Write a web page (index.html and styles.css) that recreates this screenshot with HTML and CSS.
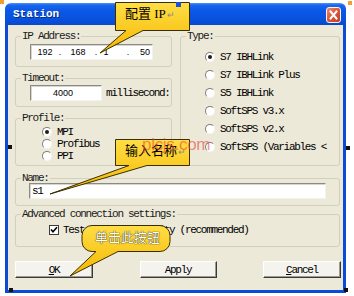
FILE: index.html
```html
<!DOCTYPE html>
<html>
<head>
<meta charset="utf-8">
<link rel="stylesheet" href="styles.css">
</head>
<body>
<div class="page">
  <div class="window">
    <div class="titlebar">
      <span class="title">Station</span>
      <span class="close"><svg width="13" height="14" viewBox="0 0 13 14"><path d="M3.5 3.5 L9.5 10.5 M9.5 3.5 L3.5 10.5" stroke="#fff" stroke-width="2" stroke-linecap="square"/></svg></span>
    </div>
    <div class="client">
      <div class="top">
        <div class="leftcol">
          <div class="grp grp-ip">
            <div class="glabel">IP Address:</div>
            <div class="field ipfield"><span>192</span><span>.</span><span>168</span><span>.</span><span>1</span><span>.</span><span>50</span></div>
          </div>
          <div class="grp grp-timeout">
            <div class="glabel">Timeout:</div>
            <div class="trow"><div class="field tfield">4000</div><span class="unit">millisecond:</span></div>
          </div>
          <div class="grp grp-profile">
            <div class="glabel">Profile:</div>
            <div class="popts">
              <div class="opt"><span class="rb on"></span><span>MPI</span></div>
              <div class="opt"><span class="rb"></span><span>Profibus</span></div>
              <div class="opt"><span class="rb"></span><span>PPI</span></div>
            </div>
          </div>
        </div>
        <div class="grp grp-type">
          <div class="glabel">Type:</div>
          <div class="topts">
            <div class="opt"><span class="rb on"></span><span>S7 IBHLink</span></div>
            <div class="opt"><span class="rb"></span><span>S7 IBHLink Plus</span></div>
            <div class="opt"><span class="rb"></span><span>S5 IBHLink</span></div>
            <div class="opt"><span class="rb"></span><span>SoftSPS v3.x</span></div>
            <div class="opt"><span class="rb"></span><span>SoftSPS v2.x</span></div>
            <div class="opt"><span class="rb"></span><span>SoftSPS (Variables &lt;</span></div>
          </div>
        </div>
      </div>
      <div class="grp grp-name">
        <div class="glabel">Name:</div>
        <div class="field nfield">s1</div>
      </div>
      <div class="grp grp-adv">
        <div class="glabel">Advanced connection settings:</div>
        <div class="crow"><span class="cb"><svg width="8" height="8" viewBox="0 0 8 8"><path d="M1 3.5 L3 5.8 L7 1.2" stroke="#000" stroke-width="1.6" fill="none"/></svg></span><span>Test the connectivity (recommended)</span></div>
      </div>
      <div class="buttons">
        <div class="btn b-ok"><span><u>O</u>K</span></div>
        <div class="btn b-apply"><span>Apply</span></div>
        <div class="btn b-cancel"><span><u>C</u>ancel</span></div>
      </div>
    </div>
  </div>

  <div class="overlay">
    <svg class="callouts" width="354" height="296" viewBox="0 0 354 296">
      <defs>
        <linearGradient id="gy" x1="0" y1="0" x2="0" y2="1">
          <stop offset="0" stop-color="#FFDE45"/>
          <stop offset="1" stop-color="#F4B700"/>
        </linearGradient>
      </defs>
      <path d="M115.5 2.5 H189.5 V30.5 H143 L100 53 L126 30.5 H115.5 Z" fill="url(#gy)" stroke="#3a2e00" stroke-width="1"/>
      <path d="M115.5 139.5 H189.5 V165.5 H147 L50 194 L129 165.5 H115.5 Z" fill="url(#gy)" stroke="#3a2e00" stroke-width="1"/>
      <path d="M92 225.5 H160 A10 10 0 0 1 170 235.5 V241.5 A10 10 0 0 1 160 251.5 H118 L70 276 L96 251.5 H92 A10 10 0 0 1 82 241.5 V235.5 A10 10 0 0 1 92 225.5 Z" fill="url(#gy)" stroke="#3a2e00" stroke-width="1"/>
    </svg>
    <span class="ctext c1">配置 IP<span class="pmark">↵</span></span>
    <span class="ctext c2">输入名称<span class="pmark">↵</span></span>
    <span class="ctext c3">单击此按钮</span>
    <span class="wm">plcjs.com</span>
    <span class="h h-tl"></span>
    <span class="h h-tr"></span>
    <span class="h h-cb"></span>
    <span class="h h-lm"></span>
    <span class="h h-rm"></span>
    <span class="h h-bl"></span>
    <span class="h h-br"></span>
  </div>
</div>
</body>
</html>
```

FILE: styles.css
```css
html, body {
  margin: 0;
  padding: 0;
  background: #fff;
}
body {
  width: 354px;
  height: 296px;
  overflow: hidden;
}
.page {
  position: relative;
  width: 354px;
  height: 296px;
  box-sizing: border-box;
  padding: 3px 8px 0 5px;
}
.window {
  width: 341px;
  height: 290px;
  display: flex;
  flex-direction: column;
}
.titlebar {
  height: 22px;
  flex: none;
  border-radius: 6px 6px 0 0;
  background: linear-gradient(#4C94F6 0%, #1A66EE 10%, #0A58E6 35%, #0853DE 70%, #0848CF 100%);
  display: flex;
  align-items: center;
  justify-content: space-between;
  padding: 0 5px 0 8px;
}
.title {
  font: bold 11px/12px "Liberation Mono", monospace;
  color: #fff;
  text-shadow: 1px 1px 0 #0b2a80;
}
.close {
  width: 15px;
  height: 16px;
  box-sizing: border-box;
  border: 1px solid #f4f4f4;
  border-radius: 3px;
  background: linear-gradient(135deg, #F08A6C 0%, #E0583A 45%, #C63A1E 100%);
  display: flex;
  align-items: center;
  justify-content: center;
  margin-top: 2px;
}
.close svg { display: block; }
.client {
  flex: 1;
  background: #ECE9D8;
  border: 3px solid #0A4AD6;
  border-top: 0;
  padding: 0 3px 12px 7px;
  font: 11px/12px "Liberation Mono", monospace;
  letter-spacing: -1.3px;
  color: #000;
}
.top {
  display: flex;
  gap: 8px;
}
.leftcol {
  width: 157px;
  flex: none;
}
.grp {
  border: 1px solid #D0D0BF;
  border-radius: 3px;
}
.glabel {
  margin: -7px 0 0 5px;
  padding: 0 1px;
  width: max-content;
  height: 12px;
  line-height: 12px;
  background: #ECE9D8;
  color: #1b1b1b;
  white-space: nowrap;
}
.field {
  box-sizing: border-box;
  height: 16px;
  background: #fff;
  border: 1px solid;
  border-color: #8a8a86 #f2f2ee #f2f2ee #8a8a86;
  box-shadow: inset 1px 1px 0 #d8d6cc;
}
.grp-ip {
  margin-top: 11px;
  padding-bottom: 6px;
}
.ipfield {
  margin: 2px 0 0 14px;
  width: 123px;
  display: grid;
  grid-template-columns: 28px 2px 34px 2px 18px 26px 8px;
  justify-items: center;
  align-items: center;
  font: 9px/14px "Liberation Sans", sans-serif;
  letter-spacing: 0;
}
.grp-timeout {
  margin-top: 11px;
  padding-bottom: 5px;
}
.trow {
  display: flex;
  align-items: center;
  margin-top: 1px;
  white-space: nowrap;
}
.tfield {
  margin-left: 14px;
  width: 72px;
  font: 9px/14px "Liberation Sans", sans-serif;
  letter-spacing: 0;
  text-align: center;
  padding-right: 6px;
}
.unit {
  margin-left: 4px;
}
.grp-profile {
  margin-top: 11px;
  padding-bottom: 3px;
}
.popts {
  margin-top: 2px;
  padding-left: 26px;
}
.popts .opt { height: 12px; }
.opt {
  display: flex;
  align-items: center;
  white-space: nowrap;
}
.rb {
  width: 10px;
  height: 10px;
  box-sizing: border-box;
  border-radius: 50%;
  border: 1px solid;
  border-color: #7e7e7a #f6f6f2 #f6f6f2 #7e7e7a;
  background: #fff;
  margin-right: 5px;
  flex: none;
  display: flex;
  align-items: center;
  justify-content: center;
}
.rb.on::after {
  content: "";
  width: 4px;
  height: 4px;
  border-radius: 50%;
  background: #1e1e1e;
}
.grp-type {
  flex: 1;
  margin-top: 11px;
}
.topts {
  margin-top: 6px;
  padding-left: 24px;
}
.topts .opt { height: 18px; }
.grp-name {
  margin-top: 12px;
  padding-bottom: 6px;
}
.nfield {
  margin: -1px 13px 0 13px;
  padding-left: 2px;
  line-height: 14px;
}
.grp-adv {
  margin-top: 8px;
  padding-bottom: 8px;
}
.crow {
  margin-top: 2px;
  height: 16px;
  display: flex;
  align-items: center;
  padding-left: 33px;
  white-space: nowrap;
}
.cb {
  width: 10px;
  height: 10px;
  box-sizing: border-box;
  border: 1px solid #3c3c3c;
  background: #fff;
  margin-right: 4px;
  display: flex;
  align-items: center;
  justify-content: center;
  flex: none;
}
.cb svg { display: block; }
.buttons {
  margin-top: 14px;
  display: flex;
  justify-content: space-between;
  margin-right: -1px;
}
.btn {
  height: 17px;
  box-sizing: border-box;
  border: 1px solid;
  border-color: #ffffff #3a3a3a #3a3a3a #ffffff;
  box-shadow: inset -1px -1px 0 #9c9a90;
  background: #F4F3EE;
  display: flex;
  align-items: center;
  justify-content: center;
}
.b-ok { width: 78px; }
.b-apply { width: 77px; }
.b-cancel { width: 78px; }

.overlay {
  position: absolute;
  left: 0;
  top: 0;
  width: 354px;
  height: 296px;
  pointer-events: none;
}
.callouts {
  position: absolute;
  left: 0;
  top: 0;
}
.ctext {
  position: absolute;
  font-family: "Liberation Serif", "Noto Sans CJK SC", serif;
  white-space: nowrap;
  color: #000;
}
.c1 {
  left: 125px;
  top: 6px;
  font-size: 13px;
  line-height: 16px;
}
.c2 {
  left: 125px;
  top: 143px;
  font-size: 13px;
  line-height: 16px;
}
.c3 {
  left: 95px;
  top: 230px;
  font-size: 13px;
  line-height: 16px;
  color: #fff;
  text-shadow: 0 0 1px #2a2200, 0 0 1px #2a2200;
}
.pmark {
  color: #8a8a8a;
  font-size: 9px;
  margin-left: 1px;
}
.wm {
  position: absolute;
  left: 142px;
  top: 135px;
  font: 17px/20px "Liberation Sans", sans-serif;
  color: rgba(228, 70, 70, 0.6);
  letter-spacing: -0.3px;
}
.h {
  position: absolute;
  width: 4px;
  height: 4px;
  background: #111;
}
.h-tl { left: 0; top: 0; background: #F0A030; }
.h-tr { left: 348px; top: 1px; background: #F0A030; }
.h-cb { left: 176px; top: 2px; width: 5px; height: 5px; background: #1D50D2; }
.h-lm { left: 8px; top: 145px; }
.h-rm { left: 346px; top: 146px; }
.h-bl { left: 9px; top: 288px; }
.h-br { left: 344px; top: 288px; }
```
